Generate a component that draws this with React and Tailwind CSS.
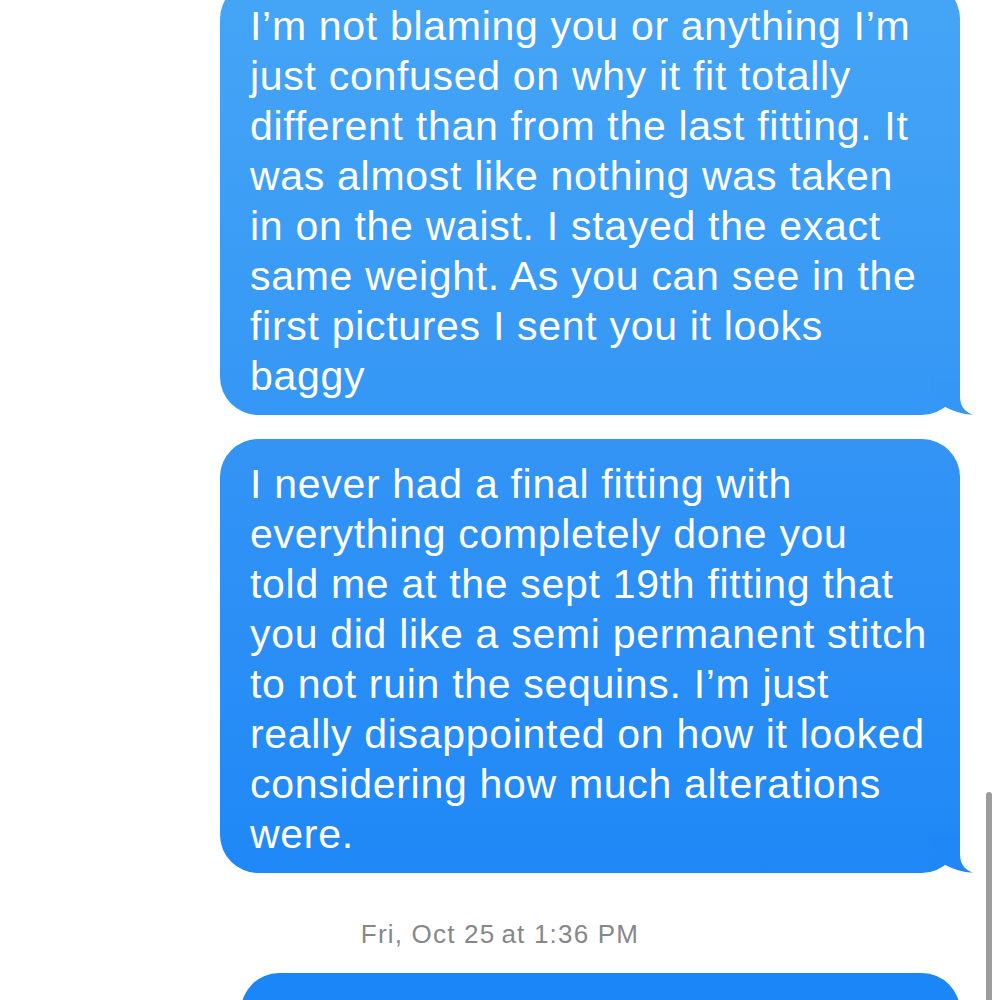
import React from "react";

const MESSAGES = [
  {
    lines: [
      "I’m not blaming you or anything I’m",
      "just confused on why it fit totally",
      "different than from the last fitting. It",
      "was almost like nothing was taken",
      "in on the waist. I stayed the exact",
      "same weight. As you can see in the",
      "first pictures I sent you it looks",
      "baggy",
    ],
    bg: "bg-gradient-to-b from-[#45a5f6] to-[#3597f5]",
    tail: "#3597f5",
  },
  {
    lines: [
      "I never had a final fitting with",
      "everything completely done you",
      "told me at the sept 19th fitting that",
      "you did like a semi permanent stitch",
      "to not ruin the sequins. I’m just",
      "really disappointed on how it looked",
      "considering how much alterations",
      "were.",
    ],
    bg: "bg-gradient-to-b from-[#3394f5] to-[#1f88f6]",
    tail: "#1f88f6",
  },
];

function Tail({ color }) {
  return (
    <svg
      className="absolute bottom-0 left-[710px]"
      width="44"
      height="40"
      viewBox="0 0 44 40"
    >
      <path
        d="M30 2 L30 22 Q30.5 36 43 39.5 Q32 40.5 13 31 L0 31 L0 2 Z"
        fill={color}
      />
    </svg>
  );
}

function Bubble({ msg }) {
  return (
    <div className="relative w-[740px]">
      <div
        className={`rounded-[38px] ${msg.bg} pl-[30px] pr-4 pt-[20px] pb-[14px] text-[41px] leading-[50px] tracking-[0.7px] text-white`}
      >
        {msg.lines.map((l, i) => (
          <div key={i} className="whitespace-nowrap">
            {l}
          </div>
        ))}
      </div>
      <Tail color={msg.tail} />
    </div>
  );
}

export default function App() {
  return (
    <div
      className="relative h-[1000px] w-[1000px] overflow-hidden bg-white"
      style={{ fontFamily: "'Liberation Sans', Arial, sans-serif" }}
    >
      <div className="-mt-[19px] flex flex-col items-end pr-[40px]">
        <Bubble msg={MESSAGES[0]} />
        <div className="h-[24px]" />
        <Bubble msg={MESSAGES[1]} />
        <div className="flex h-[100px] w-full items-center justify-center pl-[40px] pt-[22px] text-[26px] tracking-[1.2px] text-[#87878b]">
          <span>Fri, Oct 25</span>
          <span className="ml-[6px]">at 1:36 PM</span>
        </div>
        <div className="h-[120px] w-[719px] rounded-[38px] bg-[#1a86f7]" />
      </div>
      <div className="absolute left-[986px] top-[792px] h-[240px] w-[6px] rounded-full bg-[#9c9c9c]" />
    </div>
  );
}
